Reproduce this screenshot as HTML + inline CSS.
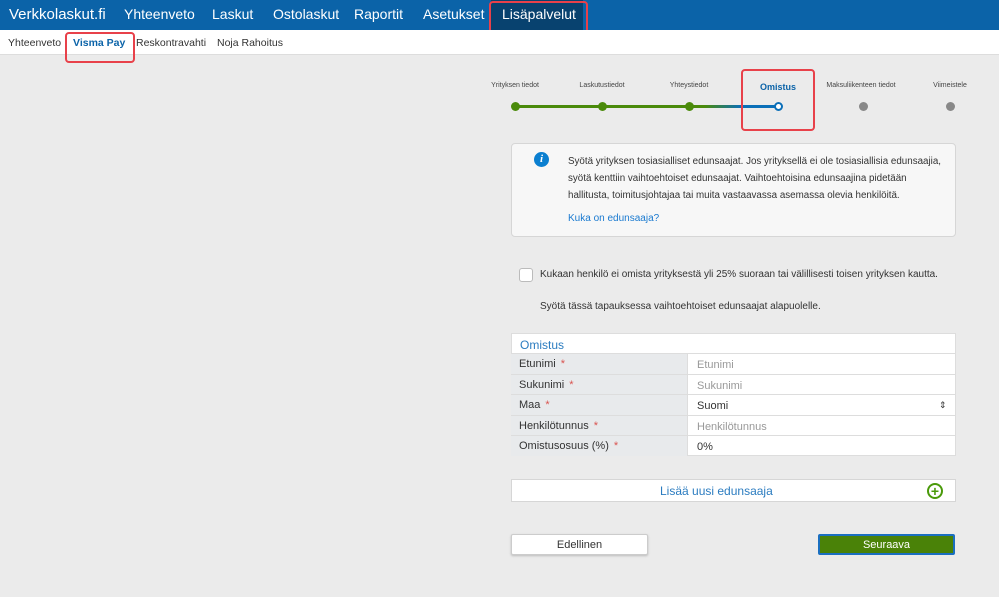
<!DOCTYPE html>
<html><head><meta charset="utf-8"><style>
*{margin:0;padding:0;box-sizing:border-box}
body{width:999px;height:597px;background:#ebebeb;font-family:"Liberation Sans",sans-serif;position:relative;overflow:hidden;color:#333}
.a{position:absolute;white-space:nowrap}
#top{position:absolute;left:0;top:0;width:999px;height:30px;background:#0b63a8}
#top span{position:absolute;top:6px;color:#fff;font-size:14px}
#sub{position:absolute;left:0;top:30px;width:999px;height:25px;background:#fff;border-bottom:1px solid #ddd}
.red{position:absolute;border:2px solid #e8414a;border-radius:4px}
.step{position:absolute;top:82px;font-size:7px;color:#444;transform:translateX(-50%)}
.dot{position:absolute;width:9px;height:9px;border-radius:50%;top:102px;margin-left:-4.5px}
.row{position:absolute;left:511px;width:445px;height:21px;border-top:1px solid #ddd;font-size:11px}
.row .l{position:absolute;left:0;top:0;width:177px;height:20px;background:#e8eaec;border-right:1px solid #ddd;padding:4px 0 0 8px}
.row .v{position:absolute;left:186px;top:5px;color:#999}
.st{color:#d9534f;margin-left:5px}
</style></head><body>
<div id="top">
<span style="left:9px;font-size:15px">Verkkolaskut.fi</span>
<span style="left:124px">Yhteenveto</span>
<span style="left:212px">Laskut</span>
<span style="left:273px">Ostolaskut</span>
<span style="left:354px">Raportit</span>
<span style="left:423px">Asetukset</span>
<div style="position:absolute;left:491px;top:0;width:92px;height:30px;background:#08426f"></div>
<span style="left:502px">Lisäpalvelut</span>
</div>
<div class="red" style="left:489px;top:1px;width:99px;height:34px"></div>
<div id="sub">
<span class="a" style="left:8px;top:7px;font-size:10.5px">Yhteenveto</span>
<span class="a" style="left:73px;top:7px;font-size:10.5px;font-weight:bold;color:#0b63a8">Visma Pay</span>
<span class="a" style="left:136px;top:7px;font-size:10.5px">Reskontravahti</span>
<span class="a" style="left:217px;top:7px;font-size:10.5px">Noja Rahoitus</span>
</div>
<div class="red" style="left:65px;top:32px;width:70px;height:31px"></div>

<div class="step" style="left:515px">Yrityksen tiedot</div>
<div class="step" style="left:602px">Laskutustiedot</div>
<div class="step" style="left:689px">Yhteystiedot</div>
<div class="step" style="left:778px;font-size:9px;font-weight:bold;color:#0b63a8;top:82px">Omistus</div>
<div class="step" style="left:861px">Maksuliikenteen tiedot</div>
<div class="step" style="left:950px">Viimeistele</div>
<div style="position:absolute;left:515px;top:105px;width:263px;height:3px;background:linear-gradient(90deg,#4a8a0a 0,#4a8a0a 72%,#0b6fb8 86%,#0b6fb8 100%)"></div>
<div class="dot" style="left:515px;background:#4a8a0a"></div>
<div class="dot" style="left:602px;background:#4a8a0a"></div>
<div class="dot" style="left:689px;background:#4a8a0a"></div>
<div class="dot" style="left:778px;background:#fff;border:2.5px solid #0b6fb8"></div>
<div class="dot" style="left:863px;background:#888"></div>
<div class="dot" style="left:950px;background:#888"></div>
<div class="red" style="left:741px;top:69px;width:74px;height:62px"></div>

<div style="position:absolute;left:511px;top:143px;width:445px;height:94px;background:#f7f7f7;border:1px solid #d6d6d6;border-radius:4px"></div>
<div style="position:absolute;left:534px;top:152px;width:15px;height:15px;border-radius:50%;background:#0b7fd0;color:#fff;font-size:11px;font-weight:bold;font-style:italic;text-align:center;line-height:15px;font-family:'Liberation Serif',serif">i</div>
<div class="a" style="left:568px;top:153px;font-size:9.8px;line-height:17px;color:#333">Syötä yrityksen tosiasialliset edunsaajat. Jos yrityksellä ei ole tosiasiallisia edunsaajia,<br>syötä kenttiin vaihtoehtoiset edunsaajat. Vaihtoehtoisina edunsaajina pidetään<br>hallitusta, toimitusjohtajaa tai muita vastaavassa asemassa olevia henkilöitä.</div>
<div class="a" style="left:568px;top:213px;font-size:10px;color:#1a7ad0">Kuka on edunsaaja?</div>

<div style="position:absolute;left:519px;top:268px;width:14px;height:14px;background:#fff;border:1px solid #bbb;border-radius:3px"></div>
<div class="a" style="left:540px;top:269px;font-size:10px">Kukaan henkilö ei omista yrityksestä yli 25% suoraan tai välillisesti toisen yrityksen kautta.</div>
<div class="a" style="left:540px;top:301px;font-size:10px">Syötä tässä tapauksessa vaihtoehtoiset edunsaajat alapuolelle.</div>

<div style="position:absolute;left:511px;top:333px;width:445px;height:123px;background:#fff;border:1px solid #ddd"></div>
<div class="a" style="left:520px;top:338px;font-size:12px;color:#2b7cc0">Omistus</div>
<div class="row" style="top:353px"><div class="l">Etunimi<span class="st">*</span></div><div class="v">Etunimi</div></div>
<div class="row" style="top:374px"><div class="l">Sukunimi<span class="st">*</span></div><div class="v">Sukunimi</div></div>
<div class="row" style="top:394px"><div class="l">Maa<span class="st">*</span></div><div class="v" style="color:#333">Suomi</div><div class="a" style="left:428px;top:5px;font-size:9px">⇕</div></div>
<div class="row" style="top:415px"><div class="l">Henkilötunnus<span class="st">*</span></div><div class="v">Henkilötunnus</div></div>
<div class="row" style="top:435px"><div class="l">Omistusosuus (%)<span class="st">*</span></div><div class="v" style="color:#333">0%</div></div>

<div style="position:absolute;left:511px;top:479px;width:445px;height:23px;background:#fff;border:1px solid #d6d6d6"></div>
<div class="a" style="left:660px;top:484px;font-size:12px;color:#2b7cc0">Lisää uusi edunsaaja</div>
<div style="position:absolute;left:927px;top:483px;width:16px;height:16px;border:2px solid #4a9a0a;border-radius:50%;color:#4a9a0a;font-size:14px;font-weight:bold;line-height:12px;text-align:center">+</div>

<div style="position:absolute;left:511px;top:534px;width:137px;height:21px;background:#fff;border:1px solid #ccc;border-radius:2px;box-shadow:0 1px 2px #bbb;text-align:center;font-size:11px;line-height:20px">Edellinen</div>
<div style="position:absolute;left:818px;top:534px;width:137px;height:21px;background:#4a8208;border:2px solid #1a6fc0;border-radius:2px;text-align:center;font-size:11px;line-height:18px;color:#fff">Seuraava</div>
</body></html>
